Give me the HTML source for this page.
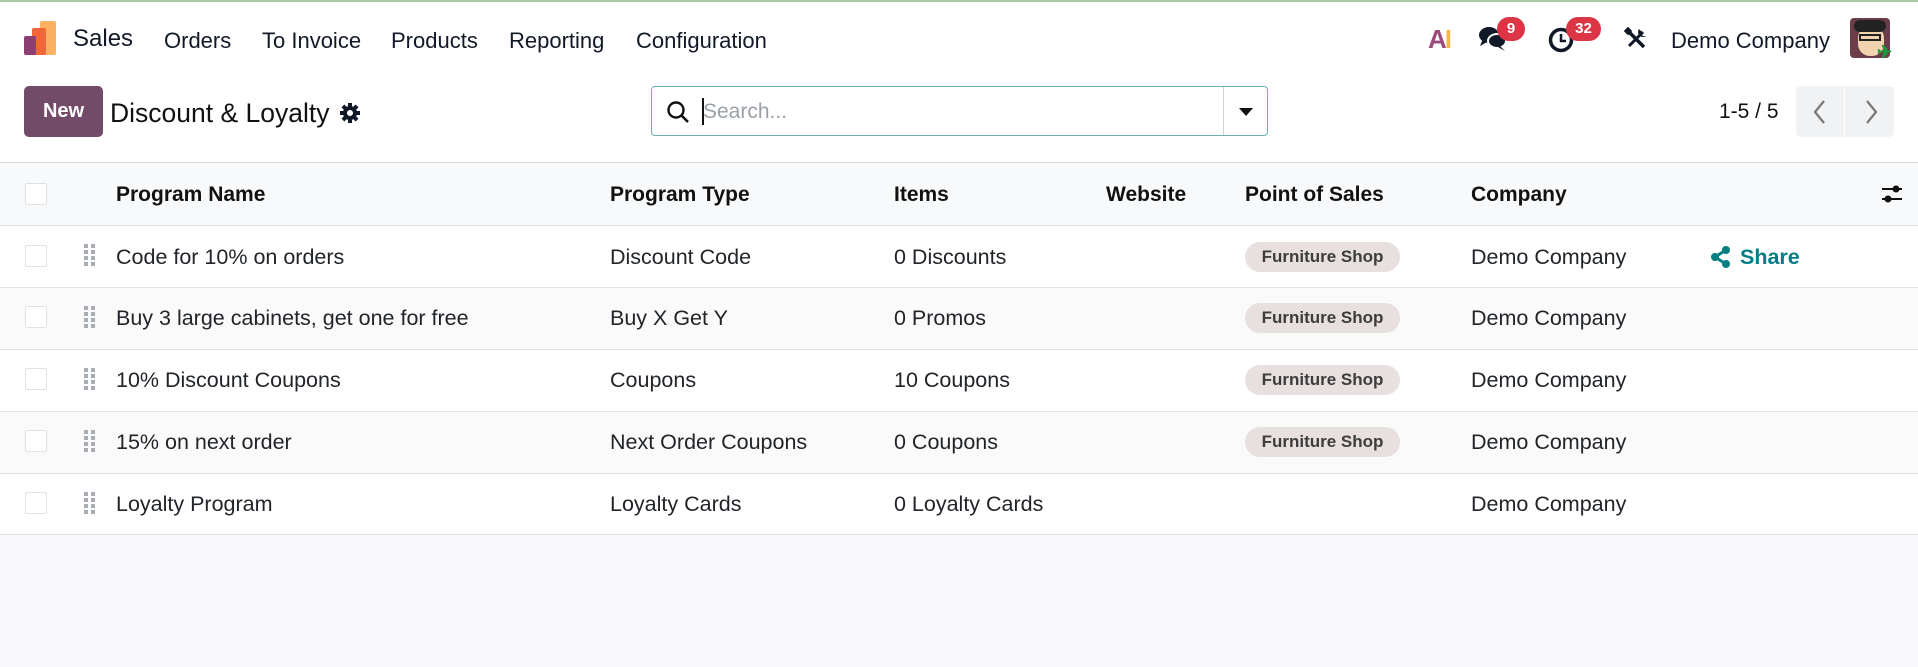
<!DOCTYPE html>
<html><head><meta charset="utf-8"><style>
*{box-sizing:border-box;margin:0;padding:0}
body{width:1918px;height:667px;background:#fff;font-family:"Liberation Sans",sans-serif;color:#212529;position:relative;overflow:hidden}
.a{position:absolute;white-space:nowrap}
.nav{font-size:22px;color:#111827;top:28px}
.hdr{font-size:21px;font-weight:bold;color:#111;top:183px}
.cb{position:absolute;left:25px;width:22px;height:22px;border:1px solid #dee2e6;background:#fff;border-radius:2px}
.row{position:absolute;left:0;width:1918px;border-bottom:1px solid #dee2e6}
.t{position:absolute;font-size:21.5px;color:#212529;white-space:nowrap}
.dr{position:absolute;left:84px;width:11px;height:22px;background:linear-gradient(90deg,#a8adb3 0 4px,transparent 4px 7px,#a8adb3 7px 11px);-webkit-mask:repeating-linear-gradient(180deg,#000 0 4px,transparent 4px 6px);mask:repeating-linear-gradient(180deg,#000 0 4px,transparent 4px 6px)}
.bd{position:absolute;left:1245px;width:155px;height:30px;border-radius:15px;background:#e7e0df;font-size:17px;font-weight:bold;color:#3d3d3d;text-align:center;line-height:30px}
.badge{position:absolute;background:#dc3545;color:#fff;font-weight:bold;font-size:15px;border-radius:12px;height:24px;line-height:24px;text-align:center;top:17px}
</style></head><body>
<div class="a" style="left:0;top:0;width:1918px;height:2px;background:#a9c9a4"></div>
<svg class="a" style="left:22px;top:20px" width="36" height="36" viewBox="0 0 36 36">
<rect x="18" y="1" width="16" height="34" rx="2" fill="#fbb15f"/>
<rect x="10" y="8" width="14" height="27" rx="2" fill="#f0673a"/>
<rect x="2" y="16" width="12" height="19" rx="2" fill="#8b3f74"/>
</svg>
<div class="a nav" style="left:73px;font-size:24px;top:25px">Sales</div>
<div class="a nav" style="left:164px">Orders</div>
<div class="a nav" style="left:262px">To Invoice</div>
<div class="a nav" style="left:391px">Products</div>
<div class="a nav" style="left:509px">Reporting</div>
<div class="a nav" style="left:636px">Configuration</div>
<div class="a" style="left:1428px;top:24px;font-size:26px;font-weight:bold;color:#f7b84b;letter-spacing:-2px"><span style="color:#9b4a7a">A</span>I</div>
<svg class="a" style="left:1478px;top:26px" width="30" height="26" viewBox="0 0 30 26"><ellipse cx="11" cy="9" rx="10" ry="8" fill="#111827"/><path d="M4 15 L2 20 L9 16Z" fill="#111827"/><ellipse cx="19" cy="15" rx="9" ry="7" fill="#111827" stroke="#fff" stroke-width="2"/><path d="M22 20 L27 25 L20 21Z" fill="#111827"/></svg>
<div class="badge" style="left:1497px;width:28px">9</div>
<svg class="a" style="left:1548px;top:27px" width="26" height="26" viewBox="0 0 26 26"><circle cx="13" cy="13" r="10.5" fill="none" stroke="#111827" stroke-width="3.5"/><path d="M13 7v7h5" fill="none" stroke="#111827" stroke-width="2.5"/></svg>
<div class="badge" style="left:1566px;width:35px">32</div>
<svg class="a" style="left:1624px;top:27px" width="24" height="24" viewBox="0 0 24 24"><path d="M4 4 L20 20" stroke="#111827" stroke-width="3.5"/><path d="M19 5 L5 19" stroke="#111827" stroke-width="3"/><path d="M15 2a5 5 0 0 0 7 7l-3 0-1-1 0-3z" fill="#111827"/><rect x="1" y="1" width="6" height="6" fill="#111827" transform="rotate(45 4 4)"/></svg>
<div class="a nav" style="left:1671px">Demo Company</div>
<div class="a" style="left:1850px;top:18px;width:40px;height:40px;border-radius:4px;background:#6b3d48;overflow:hidden">
<div style="position:absolute;left:8px;top:8px;width:26px;height:30px;border-radius:12px;background:#f1d3b0"></div>
<div style="position:absolute;left:4px;top:2px;width:32px;height:12px;border-radius:8px;background:#222"></div>
<div style="position:absolute;left:9px;top:16px;width:22px;height:7px;border:2px solid #222"></div>
</div>
<div class="a" style="left:1877px;top:42px;color:#1a9a3a;font-size:18px;font-weight:bold">✈</div>
<div class="a" style="left:24px;top:86px;width:79px;height:51px;background:#714b67;border-radius:5px;color:#fff;font-size:20px;font-weight:bold;text-align:center;line-height:51px">New</div>
<div class="a" style="left:110px;top:98px;font-size:26.5px;color:#111">Discount &amp; Loyalty</div>
<svg class="a" style="left:340px;top:103px" width="20" height="20" viewBox="0 0 20 20"><g fill="#111827"><circle cx="10" cy="10" r="7"/><rect x="8" y="0" width="4" height="20"/><rect x="0" y="8" width="20" height="4"/><rect x="8" y="0" width="4" height="20" transform="rotate(45 10 10)"/><rect x="8" y="0" width="4" height="20" transform="rotate(-45 10 10)"/></g><circle cx="10" cy="10" r="3" fill="#fff"/></svg>
<div class="a" style="left:651px;top:86px;width:617px;height:50px;border:1px solid #6aaeb8;border-radius:4px"></div>
<svg class="a" style="left:666px;top:100px" width="24" height="24" viewBox="0 0 24 24"><circle cx="10" cy="10" r="7.5" fill="none" stroke="#111" stroke-width="2.4"/><path d="M15.5 15.5L22 22" stroke="#111" stroke-width="2.6"/></svg>
<div class="a" style="left:702px;top:98px;width:2px;height:27px;background:#111"></div>
<div class="a" style="left:703px;top:100px;font-size:21px;color:#9aa0a6">Search...</div>
<div class="a" style="left:1223px;top:87px;width:1px;height:48px;background:#cfd4d8"></div>
<svg class="a" style="left:1238px;top:107px" width="16" height="10" viewBox="0 0 16 10"><path d="M1 1h14L8 9z" fill="#111"/></svg>
<div class="a" style="left:1719px;top:100px;font-size:21px;color:#111">1-5 / 5</div>
<div class="a" style="left:1796px;top:86px;width:98px;height:51px;background:#f1f2f4;border-radius:5px"></div>
<div class="a" style="left:1844px;top:86px;width:1px;height:51px;background:#fff"></div>
<svg class="a" style="left:1811px;top:99px" width="18" height="26" viewBox="0 0 18 26"><path d="M13 2L4 13l9 11" fill="none" stroke="#777" stroke-width="2.2"/></svg>
<svg class="a" style="left:1862px;top:99px" width="18" height="26" viewBox="0 0 18 26"><path d="M5 2l9 11-9 11" fill="none" stroke="#777" stroke-width="2.2"/></svg>
<div class="a" style="left:0;top:162px;width:1918px;height:64px;background:#f8f9fa;border-top:1px solid #d8dadd;border-bottom:1px solid #dee2e6"></div>
<div class="cb" style="top:183px"></div>
<div class="a hdr" style="left:116px">Program Name</div>
<div class="a hdr" style="left:610px">Program Type</div>
<div class="a hdr" style="left:894px">Items</div>
<div class="a hdr" style="left:1106px">Website</div>
<div class="a hdr" style="left:1245px">Point of Sales</div>
<div class="a hdr" style="left:1471px">Company</div>
<svg class="a" style="left:1881px;top:184px" width="22" height="20" viewBox="0 0 22 20"><path d="M1 5h20M1 15h20" stroke="#111" stroke-width="2"/><circle cx="15" cy="5" r="3.5" fill="#111"/><circle cx="7" cy="15" r="3.5" fill="#111"/></svg>
<div class="row" style="top:226px;height:62px"></div>
<div class="row" style="top:288px;height:62px;background:#fafafa"></div>
<div class="row" style="top:350px;height:62px"></div>
<div class="row" style="top:412px;height:62px;background:#fafafa"></div>
<div class="row" style="top:474px;height:61px"></div>

<div class="cb" style="top:245px"></div><div class="dr" style="top:244px"></div>
<div class="t" style="left:116px;top:245px">Code for 10% on orders</div>
<div class="t" style="left:610px;top:245px">Discount Code</div>
<div class="t" style="left:894px;top:245px">0 Discounts</div>
<div class="bd" style="top:242px">Furniture Shop</div>
<div class="t" style="left:1471px;top:245px">Demo Company</div>
<svg class="a" style="left:1710px;top:246px" width="21" height="22" viewBox="0 0 21 22"><path d="M16 4L5 11l11 7" stroke="#017e84" stroke-width="3" fill="none"/><circle cx="16" cy="4" r="4" fill="#017e84"/><circle cx="5" cy="11" r="4" fill="#017e84"/><circle cx="16" cy="18" r="4" fill="#017e84"/></svg>
<div class="t" style="left:1740px;top:245px;color:#017e84;font-weight:bold">Share</div>

<div class="cb" style="top:306px"></div><div class="dr" style="top:306px"></div>
<div class="t" style="left:116px;top:306px">Buy 3 large cabinets, get one for free</div>
<div class="t" style="left:610px;top:306px">Buy X Get Y</div>
<div class="t" style="left:894px;top:306px">0 Promos</div>
<div class="bd" style="top:303px">Furniture Shop</div>
<div class="t" style="left:1471px;top:306px">Demo Company</div>

<div class="cb" style="top:368px"></div><div class="dr" style="top:368px"></div>
<div class="t" style="left:116px;top:368px">10% Discount Coupons</div>
<div class="t" style="left:610px;top:368px">Coupons</div>
<div class="t" style="left:894px;top:368px">10 Coupons</div>
<div class="bd" style="top:365px">Furniture Shop</div>
<div class="t" style="left:1471px;top:368px">Demo Company</div>

<div class="cb" style="top:430px"></div><div class="dr" style="top:430px"></div>
<div class="t" style="left:116px;top:430px">15% on next order</div>
<div class="t" style="left:610px;top:430px">Next Order Coupons</div>
<div class="t" style="left:894px;top:430px">0 Coupons</div>
<div class="bd" style="top:427px">Furniture Shop</div>
<div class="t" style="left:1471px;top:430px">Demo Company</div>

<div class="cb" style="top:492px"></div><div class="dr" style="top:492px"></div>
<div class="t" style="left:116px;top:492px">Loyalty Program</div>
<div class="t" style="left:610px;top:492px">Loyalty Cards</div>
<div class="t" style="left:894px;top:492px">0 Loyalty Cards</div>
<div class="t" style="left:1471px;top:492px">Demo Company</div>
<div class="a" style="left:0;top:535px;width:1918px;height:132px;background:#f9f9fb"></div>
</body></html>
